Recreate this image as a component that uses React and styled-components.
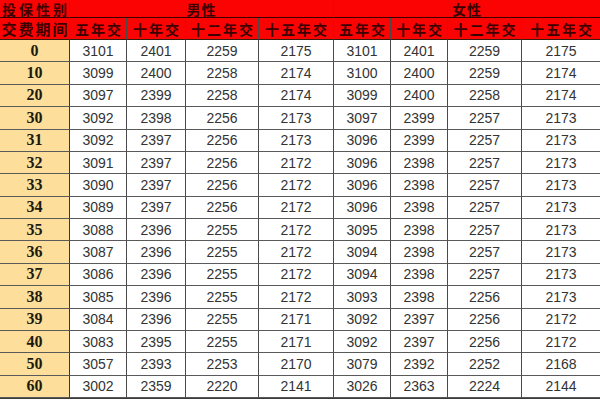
import React from 'react';
import styled, { createGlobalStyle } from 'styled-components';

const GlobalStyle = createGlobalStyle`
  html, body {
    margin: 0;
    padding: 0;
    background: #ffffff;
  }
`;

const columns = [70, 57, 59, 73, 75, 57, 57, 74, 78];
const terms = ['五年交', '十年交', '十二年交', '十五年交'];

const rows = [
  ['0', 3101, 2401, 2259, 2175, 3101, 2401, 2259, 2175],
  ['10', 3099, 2400, 2258, 2174, 3100, 2400, 2259, 2174],
  ['20', 3097, 2399, 2258, 2174, 3099, 2400, 2258, 2174],
  ['30', 3092, 2398, 2256, 2173, 3097, 2399, 2257, 2173],
  ['31', 3092, 2397, 2256, 2173, 3096, 2399, 2257, 2173],
  ['32', 3091, 2397, 2256, 2172, 3096, 2398, 2257, 2173],
  ['33', 3090, 2397, 2256, 2172, 3096, 2398, 2257, 2173],
  ['34', 3089, 2397, 2256, 2172, 3096, 2398, 2257, 2173],
  ['35', 3088, 2396, 2255, 2172, 3095, 2398, 2257, 2173],
  ['36', 3087, 2396, 2255, 2172, 3094, 2398, 2257, 2173],
  ['37', 3086, 2396, 2255, 2172, 3094, 2398, 2257, 2173],
  ['38', 3085, 2396, 2255, 2172, 3093, 2398, 2256, 2173],
  ['39', 3084, 2396, 2255, 2171, 3092, 2397, 2256, 2172],
  ['40', 3083, 2395, 2255, 2171, 3092, 2397, 2256, 2172],
  ['50', 3057, 2393, 2253, 2170, 3079, 2392, 2252, 2168],
  ['60', 3002, 2359, 2220, 2141, 3026, 2363, 2224, 2144],
];

const Table = styled.div`
  display: grid;
  grid-template-columns: ${columns.map((c) => c + 'px').join(' ')};
  grid-template-rows: 18px 22px repeat(16, 1fr);
  width: 600px;
  height: 399px;
  box-sizing: border-box;
  border-bottom: 1px solid #3a3a3a;
`;

const Cell = styled.div`
  box-sizing: border-box;
  display: flex;
  align-items: center;
  justify-content: center;
  overflow: hidden;
  border-right: ${(p) => (p.$last ? 'none' : '1px solid #4a4a4a')};
  border-bottom: 1px solid #5a5a5a;
  white-space: nowrap;
`;

const TopHead = styled(Cell)`
  grid-column: ${(p) => p.$span || 'auto'};
  overflow: visible;
  background: #fb0303;
  color: #3d0000;
  font-family: "Noto Sans CJK SC", sans-serif;
  font-weight: 700;
  font-size: 14px;
  line-height: 1;
  border-bottom: 1px solid #3a0000;
  letter-spacing: ${(p) => (p.$wide ? '3px' : '1px')};
  padding-left: ${(p) => (p.$wide ? '3px' : '0')};
`;

const SubHead = styled(Cell)`
  background: #fb0303;
  color: #3d0000;
  font-family: "Noto Sans CJK SC", sans-serif;
  font-weight: 700;
  font-size: ${(p) => (p.$wide ? '15px' : '14px')};
  line-height: 1;
  letter-spacing: 2px;
  padding-left: 2px;
  border-bottom: 1px solid #3a1a0a;
`;

const Term = styled(Cell)`
  background: #fdde9b;
  color: #1e1a10;
  font-family: "Liberation Serif", serif;
  font-weight: 700;
  font-size: 16px;
  border-right: 1px solid #3a3a3a;
`;

const Value = styled(Cell)`
  background: #ffffff;
  color: #333333;
  font-family: "Liberation Sans", sans-serif;
  font-size: 14px;
`;

export default function App() {
  return (
    <>
      <GlobalStyle />
      <Table>
        <TopHead $wide>投保性别</TopHead>
        <TopHead $span="span 4">男性</TopHead>
        <TopHead $span="span 4" $last>女性</TopHead>

        <SubHead $wide>交费期间</SubHead>
        {[...terms, ...terms].map((t, i) => (
          <SubHead key={i} $last={i === 7}>
            {t}
          </SubHead>
        ))}

        {rows.map((row) => (
          <React.Fragment key={row[0]}>
            <Term>{row[0]}</Term>
            {row.slice(1).map((v, i) => (
              <Value key={i} $last={i === 7}>
                {v}
              </Value>
            ))}
          </React.Fragment>
        ))}
      </Table>
    </>
  );
}
